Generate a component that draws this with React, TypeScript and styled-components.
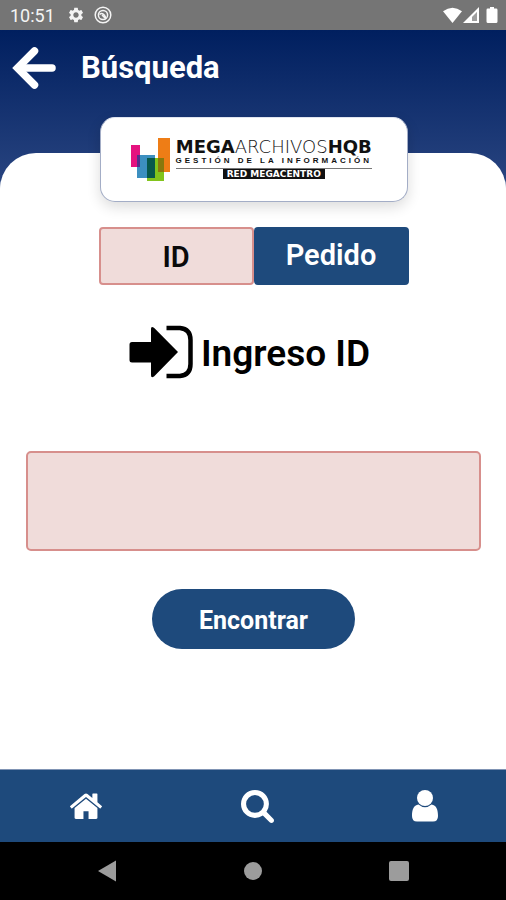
import React, { useState } from "react";
import styled, { createGlobalStyle } from "styled-components";
import { MdSettings } from "react-icons/md";

const navy = "#1e4a7c";
const blush = "#f0dcda";
const rose = "#d78f8c";

const GlobalStyle = createGlobalStyle`
  * { box-sizing: border-box; }
  body { margin: 0; font-family: Roboto, "Liberation Sans", sans-serif; background: #fff; }
  button, input { font-family: inherit; margin: 0; }
  svg { display: block; flex: none; }
`;

const Screen = styled.div`
  display: flex;
  flex-direction: column;
  min-height: 100vh;
`;

const StatusBar = styled.div`
  display: flex;
  align-items: center;
  justify-content: space-between;
  height: 30px;
  padding: 0 8px 0 10px;
  background: #757575;
  color: #f4f4f4;
  font-size: 18px;
`;

const StatusGroup = styled.div`
  display: flex;
  align-items: center;
  gap: 9px;
`;

const Clock = styled.span`
  margin-right: 3px;
`;

const Backdrop = styled.div`
  flex: 1;
  display: flex;
  flex-direction: column;
  background: linear-gradient(#001f5f 0, #27437f 150px, #fff 160px);
`;

const Header = styled.header`
  display: flex;
  align-items: center;
  gap: 24px;
  height: 76px;
  padding-left: 12px;
  color: #fff;
`;

const Title = styled.h1`
  margin: 0;
  font-size: 31px;
  line-height: 40px;
  font-weight: 700;
`;

const IconButton = styled.button`
  display: flex;
  align-items: center;
  justify-content: center;
  padding: 0;
  border: 0;
  background: none;
  color: inherit;
  cursor: pointer;
`;

const Sheet = styled.main`
  flex: 1;
  display: flex;
  flex-direction: column;
  align-items: center;
  margin-top: 47px;
  padding: 0 25px 24px 26px;
  border-radius: 36px 36px 0 0;
  background: #fff;
`;

const LogoCard = styled.div`
  display: flex;
  align-items: flex-start;
  gap: 6px;
  width: 308px;
  height: 85px;
  margin-top: -36px;
  padding: 20px 0 0 30px;
  border: 1px solid #a3adc6;
  border-top-color: #dfe4ef;
  border-radius: 15px;
  background: #fff;
  box-shadow: 0 5px 14px rgba(0, 0, 0, 0.14);
`;

const LogoText = styled.div`
  display: flex;
  flex-direction: column;
  align-items: center;
  font-family: "DejaVu Sans", sans-serif;
  color: #111;
`;

const Wordmark = styled.div`
  font-size: 18px;
  line-height: 18px;
  font-weight: 200;
  white-space: nowrap;
  b { font-weight: 700; }
`;

const Tagline = styled.div`
  padding-bottom: 2px;
  border-bottom: 1px solid #777;
  font-family: "Liberation Sans", sans-serif;
  font-size: 8px;
  line-height: 10px;
  font-weight: 700;
  letter-spacing: 3px;
  white-space: nowrap;
`;

const Network = styled.div`
  padding: 0 4px;
  background: #111;
  color: #fff;
  font-size: 9px;
  line-height: 10px;
  font-weight: 700;
  white-space: nowrap;
`;

const Tabs = styled.div`
  display: grid;
  grid-template-columns: 1fr 1fr;
  width: 310px;
  margin-top: 25px;
`;

const Tab = styled.button<{ $active: boolean }>`
  height: 58px;
  padding: ${(p) => (p.$active ? "2px 0 0" : "0 0 2px")};
  border: 2px solid ${(p) => (p.$active ? rose : navy)};
  border-radius: 4px;
  background: ${(p) => (p.$active ? blush : navy)};
  color: ${(p) => (p.$active ? "#0a0a0a" : "#fff")};
  font-size: 29px;
  line-height: 36px;
  font-weight: 600;
  cursor: pointer;
`;

const EntryLabel = styled.label`
  display: flex;
  align-items: center;
  gap: 8px;
  margin-top: 39px;
  padding-right: 8px;
  color: #000;
  font-size: 37px;
  line-height: 56px;
  font-weight: 600;
`;

const EntryText = styled.span`
  padding-top: 4px;
  line-height: 52px;
`;

const EntryInput = styled.input`
  width: 100%;
  height: 100px;
  margin-top: 71px;
  padding: 0 20px;
  border: 2px solid ${rose};
  border-radius: 5px;
  outline: 0;
  background: ${blush};
  font-size: 36px;
`;

const FindButton = styled.button`
  height: 60px;
  width: 203px;
  margin-top: 38px;
  padding: 2px 0 0;
  border: 0;
  border-radius: 30px;
  background: ${navy};
  color: #fff;
  font-size: 25px;
  font-weight: 700;
  cursor: pointer;
`;

const NavBar = styled.nav`
  display: flex;
  justify-content: space-between;
  height: 73px;
  padding: 0 68px 0 70px;
  border-top: 1px solid #8094b4;
  background: ${navy};
  color: #fff;
`;

const SystemBar = styled.div`
  display: grid;
  grid-template-columns: repeat(3, 1fr);
  height: 58px;
  padding: 0 34px;
  background: #000;
  color: #9c9c9c;
`;

function MegaMark() {
  return (
    <svg width="39" height="44" viewBox="0 0 39 44" aria-hidden="true">
      <rect x="0" y="7" width="9" height="22" fill="#e5127f" />
      <rect x="27" y="0" width="12" height="34" fill="#ee7d16" />
      <rect x="6" y="17" width="18" height="23" fill="#3c8fc0" />
      <rect x="16" y="20" width="17" height="23" fill="#82c41c" />
      <rect x="6" y="17" width="3" height="12" fill="#542f8d" />
      <rect x="16" y="20" width="8" height="20" fill="#07584b" />
      <rect x="27" y="20" width="6" height="14" fill="#88780d" />
    </svg>
  );
}

function App() {
  const [tab, setTab] = useState("ID");
  return (
    <Screen>
      <GlobalStyle />
      <StatusBar>
        <StatusGroup>
          <Clock>10:51</Clock>
          <MdSettings size={18} aria-hidden="true" />
          <svg width="18" height="18" viewBox="0 0 18 18" fill="none" stroke="currentColor" aria-hidden="true">
            <circle cx="9" cy="9" r="7.8" strokeWidth="1.5" />
            <circle cx="9" cy="9" r="4.6" strokeWidth="1.5" />
            <path d="M5.5 8.5c2.500-2 4.500-1 6.500 3.500M8 9l4 4" strokeWidth="1.5" />
          </svg>
        </StatusGroup>
        <svg width="55" height="16" viewBox="0 0 55 16" fill="#fff" aria-hidden="true">
          <path d="M9.5 16 0 4.2Q9.5-2.8 19 4.2Z" />
          <path fillRule="evenodd" d="M20 16 36 0v16ZM29 14h5V5l-5 5Z" />
          <path d="M29 14V10l5-5v9Z" fillOpacity="0.3" />
          <path d="M47 0h4v1.6h2.2q1.3 0 1.3 1.3v11.6q0 1.5-1.5 1.5h-8q-1.5 0-1.5-1.5V2.9q0-1.3 1.3-1.3H47Z" />
        </svg>
      </StatusBar>
      <Backdrop>
        <Header>
          <IconButton aria-label="Volver">
            <svg width="45" height="44" viewBox="0 0 45 44" fill="none" stroke="#fff" strokeWidth="7.5" aria-hidden="true">
              <path d="M8 22H40" strokeLinecap="round" />
              <path d="M22.5 5 5.5 22l17 17" strokeLinejoin="miter" strokeLinecap="round" />
            </svg>
          </IconButton>
          <Title>Búsqueda</Title>
        </Header>
        <Sheet>
          <LogoCard>
            <MegaMark />
            <LogoText>
              <Wordmark><b>MEGA</b>ARCHIVOS<b>HQB</b></Wordmark>
              <Tagline>GESTIÓN DE LA INFORMACIÓN</Tagline>
              <Network>RED MEGACENTRO</Network>
            </LogoText>
          </LogoCard>
          <Tabs>
            {["ID", "Pedido"].map((name) => (
              <Tab key={name} $active={tab === name} aria-pressed={tab === name} onClick={() => setTab(name)}>
                {name}
              </Tab>
            ))}
          </Tabs>
          <EntryLabel htmlFor="entry">
            <svg width="64" height="54" viewBox="0 0 64 54" aria-hidden="true">
              <path d="M3 17H22V4q0-3.5 3-1.2L49 27 25 51.5q-3 2.2-3-1.5V37.5H3Q.5 37.5.5 35V19.5Q.5 17 3 17Z" />
              <path d="M37.5 3H51Q61.5 4 61.5 15V39Q61.5 50 51 51H37.5" fill="none" stroke="#000" strokeWidth="4.5" />
            </svg>
            <EntryText>Ingreso ID</EntryText>
          </EntryLabel>
          <EntryInput id="entry" type="text" />
          <FindButton>Encontrar</FindButton>
        </Sheet>
      </Backdrop>
      <NavBar>
        <IconButton aria-label="Inicio">
          <svg width="32" height="26" viewBox="26 227 1612 1310" fill="currentColor" aria-hidden="true">
            <path d="M1408 992v480q0 26-19 45t-45 19H960v-384H704v384H320q-26 0-45-19t-19-45V992q0-1 .5-3t.5-3l575-474 575 474q1 2 1 6zm223-69l-62 74q-8 9-21 11h-3q-13 0-21-7L832 424l-692 577q-12 8-24 7-13-2-21-11l-62-74q-8-10-7-23.5t11-21.5l719-599q32-26 76-26t76 26l244 204V288q0-14 9-23t23-9h192q14 0 23 9t9 23v408l219 182q10 8 11 21.5t-7 23.5z" />
          </svg>
        </IconButton>
        <IconButton aria-label="Buscar">
          <svg width="33" height="33" viewBox="64 128 1664 1664" fill="currentColor" aria-hidden="true">
            <path d="M1216 832q0-185-131.5-316.5T768 384 451.5 515.5 320 832t131.5 316.5T768 1280t316.5-131.5T1216 832zm512 832q0 52-38 90t-90 38q-54 0-90-38l-343-342q-179 124-399 124-143 0-273.5-55.5t-225-150-150-225T64 832t55.5-273.5 150-225 225-150T768 128t273.5 55.5 225 150 150 225T1472 832q0 220-124 399l343 343q37 37 37 90z" />
          </svg>
        </IconButton>
        <IconButton aria-label="Perfil">
          <svg width="26" height="32" viewBox="0 0 26 32" fill="currentColor" aria-hidden="true">
            <circle cx="13" cy="8" r="8" />
            <path d="M6.5 14.5Q13 20 19.5 14.5C24.5 15 26 20 26 26q0 5.5-5 5.5H5Q0 31.5 0 26C0 20 1.5 15 6.5 14.5Z" />
          </svg>
        </IconButton>
      </NavBar>
      <SystemBar>
        <IconButton aria-label="Atrás">
          <svg width="18" height="22" viewBox="0 0 18 22" fill="currentColor" aria-hidden="true"><path d="M18 0.5v21L0 11Z" /></svg>
        </IconButton>
        <IconButton aria-label="Pantalla principal">
          <svg width="18" height="18" viewBox="0 0 18 18" fill="currentColor" aria-hidden="true"><circle cx="9" cy="9" r="9" /></svg>
        </IconButton>
        <IconButton aria-label="Recientes">
          <svg width="20" height="20" viewBox="0 0 20 20" fill="currentColor" aria-hidden="true"><rect width="20" height="20" rx="2" /></svg>
        </IconButton>
      </SystemBar>
    </Screen>
  );
}

export default App;
